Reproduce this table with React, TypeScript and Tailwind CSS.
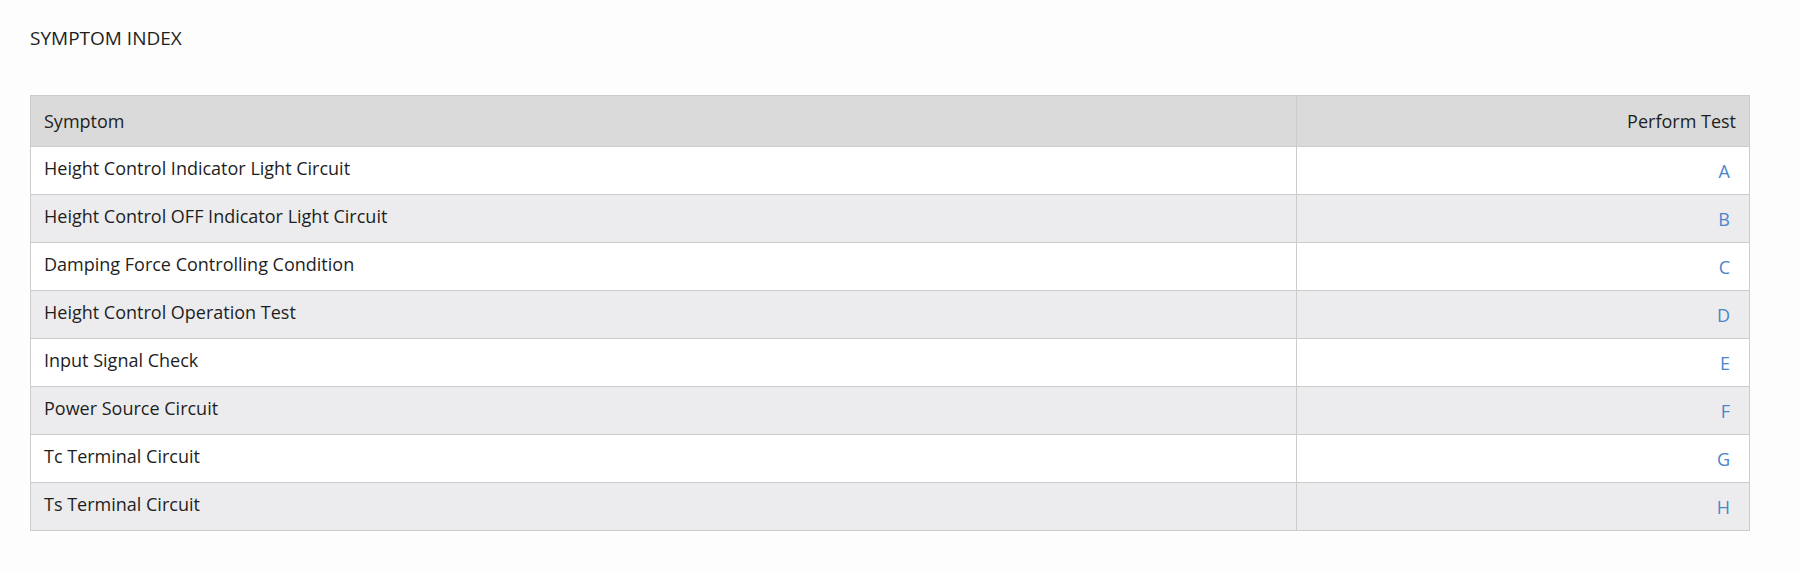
import React from 'react';

interface SymptomRow {
  symptom: string;
  test: string;
}

const rows: SymptomRow[] = [
  { symptom: 'Height Control Indicator Light Circuit', test: 'A' },
  { symptom: 'Height Control OFF Indicator Light Circuit', test: 'B' },
  { symptom: 'Damping Force Controlling Condition', test: 'C' },
  { symptom: 'Height Control Operation Test', test: 'D' },
  { symptom: 'Input Signal Check', test: 'E' },
  { symptom: 'Power Source Circuit', test: 'F' },
  { symptom: 'Tc Terminal Circuit', test: 'G' },
  { symptom: 'Ts Terminal Circuit', test: 'H' },
];

export default function App() {
  return (
    <div
      className="min-h-[572px] w-full bg-[#fdfdfd] px-[30px] pt-[26px] text-[#1e1e1e]"
      style={{ fontFamily: '"Open Sans", "Noto Sans", sans-serif' }}
    >
      <h2 className="text-[19px] leading-[24px] font-normal">SYMPTOM INDEX</h2>

      <table className="mt-[45px] w-[1720px] border-collapse border border-[#cccccc] text-[18px]">
        <thead>
          <tr className="h-[51px] bg-[#dadada]">
            <th className="border border-[#cccccc] px-[13px] text-left font-normal">Symptom</th>
            <th className="w-[453px] border border-[#cccccc] px-[13px] text-right font-normal">Perform Test</th>
          </tr>
        </thead>
        <tbody>
          {rows.map((row, i) => (
            <tr key={row.test} className={i % 2 === 0 ? 'h-[48px] bg-white' : 'h-[48px] bg-[#ececee]'}>
              <td className="border border-[#cccccc] px-[13px] pb-[4px]">{row.symptom}</td>
              <td className="border border-[#cccccc] pr-[19px] pt-[1px] text-right">
                <a className="text-[18px] text-[#4a86c8]">{row.test}</a>
              </td>
            </tr>
          ))}
        </tbody>
      </table>
    </div>
  );
}
